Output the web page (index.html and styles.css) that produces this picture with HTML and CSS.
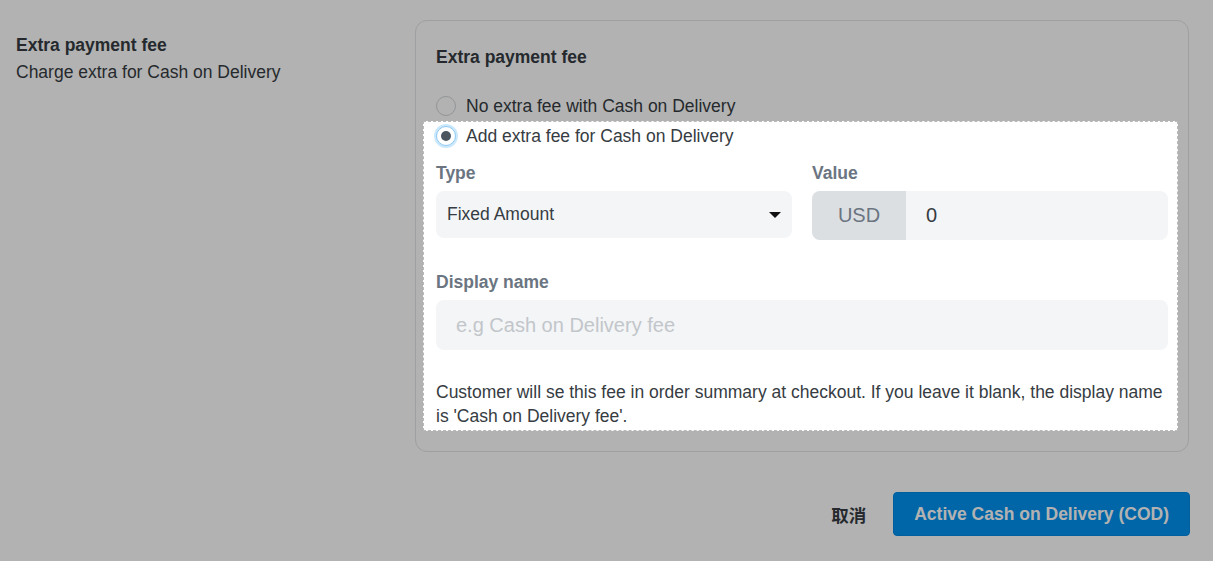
FILE: index.html
```html
<!DOCTYPE html>
<html lang="en">
<head>
    <meta charset="UTF-8">
    <meta name="viewport" content="width=device-width, initial-scale=1.0">
    <title>Cash on Delivery - Extra payment fee</title>
    <link rel="stylesheet" href="styles.css">
</head>
<body>
    <div class="page">
        <div class="side">
            <div class="side-title">Extra payment fee</div>
            <div class="side-desc">Charge extra for Cash on Delivery</div>
        </div>

        <div class="card">
            <div class="card-title">Extra payment fee</div>

            <label class="radio-row">
                <span class="radio"></span>
                No extra fee with Cash on Delivery
            </label>

            <!-- highlighted step of the onboarding tour -->
            <div class="tour-spot">
                <label class="radio-row">
                    <span class="radio checked"></span>
                    Add extra fee for Cash on Delivery
                </label>

                <div class="field-grid">
                    <div class="field">
                        <div class="field-label">Type</div>
                        <div class="select">
                            <span>Fixed Amount</span>
                            <span class="caret"></span>
                        </div>
                    </div>
                    <div class="field">
                        <div class="field-label">Value</div>
                        <div class="input-group">
                            <span class="addon">USD</span>
                            <input type="text" class="value-input" value="0">
                        </div>
                    </div>
                </div>

                <div class="field display-name">
                    <div class="field-label">Display name</div>
                    <input type="text" class="text-input" placeholder="e.g Cash on Delivery fee">
                </div>

                <p class="help">Customer will se this fee in order summary at checkout. If you leave it blank, the display name is 'Cash on Delivery fee'.</p>
            </div>
        </div>
    </div>

    <div class="footer">
        <span class="cancel">取消</span>
        <button class="btn-primary">Active Cash on Delivery (COD)</button>
    </div>

    <div class="tour-mask"></div>
</body>
</html>
```

FILE: styles.css
```css
body {
	margin: 0;
	font-family: "Liberation Sans", Arial, "Noto Sans CJK SC", sans-serif;
	font-size: 17.5px;
	color: #363c42;
	background-color: #fff;
}

.page {
	display: flex;
	padding: 20px 24px 0 16px;
}

.side {
	width: 399px;
	flex: none;
	margin-top: 12px;
	line-height: 27px;
}

.side-title {
	font-weight: bold;
}

.card {
	flex: 1;
	min-width: 0;
	background-color: #fff;
	border: 1px solid #e2e4e7;
	border-radius: 12px;
	padding: 24px 20px 20px;
}

.card-title {
	font-weight: bold;
	line-height: 24px;
	margin-bottom: 22px;
}

.radio-row {
	display: flex;
	align-items: center;
	gap: 10px;
	height: 30px;
}

.radio {
	position: relative;
	width: 20px;
	height: 20px;
	box-sizing: border-box;
	border: 1px solid #d2d5d9;
	border-radius: 50%;
	background-color: #fff;
}

.radio.checked {
	border-color: #8ec9f2;
	box-shadow: 0 0 0 2px #cbe8fc;
}

.radio.checked::after {
	content: "";
	position: absolute;
	top: 4px;
	left: 4px;
	width: 10px;
	height: 10px;
	border-radius: 50%;
	background-color: #4b5560;
}

/* white box that stays above the dark mask */
.tour-spot {
	position: relative;
	z-index: 11;
	background-color: #fff;
	margin: 0 -10px 0 -13px;
	padding: 0 10px 3px 13px;
	outline: 1px dashed #b8b8b8;
	outline-offset: -1px;
}

.field-grid {
	display: grid;
	grid-template-columns: repeat(2, minmax(0, 1fr));
	gap: 20px;
	margin-top: 10px;
}

.field-label {
	font-weight: bold;
	color: #6b7581;
	line-height: 24px;
	margin-bottom: 6px;
}

.select {
	height: 47px;
	padding: 0 11px;
	background-color: #f4f5f7;
	border-radius: 8px;
	display: flex;
	align-items: center;
	justify-content: space-between;
}

.caret {
	width: 0;
	height: 0;
	border-top: 6px solid #111;
	border-left: 6px solid transparent;
	border-right: 6px solid transparent;
}

.input-group {
	display: flex;
	height: 49px;
	margin-top: 1px;
	background-color: #f4f5f7;
	border-radius: 8px;
	overflow: hidden;
}

.addon {
	width: 94px;
	flex: none;
	display: flex;
	align-items: center;
	justify-content: center;
	background-color: #dcdfe2;
	color: #6b7581;
	font-size: 20px;
}

.value-input,
.text-input {
	border: none;
	outline: none;
	background: transparent;
	font-family: inherit;
	font-size: 20px;
	color: #363c42;
	padding: 0 20px;
	box-sizing: border-box;
}

.value-input {
	flex: 1;
	width: 0;
	min-width: 0;
}

.display-name {
	margin-top: 30px;
}

.text-input {
	display: block;
	width: 100%;
	height: 50px;
	background-color: #f4f5f7;
	border-radius: 8px;
}

.text-input::placeholder {
	color: #c2c6ca;
}

.help {
	margin: 30px 0 0;
	line-height: 24px;
}

.footer {
	display: flex;
	justify-content: flex-end;
	align-items: center;
	margin-top: 40px;
	padding-right: 23px;
}

.cancel {
	font-weight: bold;
	margin-right: 27px;
}

.btn-primary {
	height: 44px;
	padding: 0 20px;
	border: 1px solid #0089e4;
	border-radius: 4px;
	background-color: #0092f0;
	color: #fff;
	font-family: inherit;
	font-size: 17.5px;
	font-weight: bold;
	cursor: pointer;
}

.tour-mask {
	position: fixed;
	top: 0;
	right: 0;
	bottom: 0;
	left: 0;
	z-index: 10;
	background-color: rgba(0, 0, 0, 0.3);
}
```
